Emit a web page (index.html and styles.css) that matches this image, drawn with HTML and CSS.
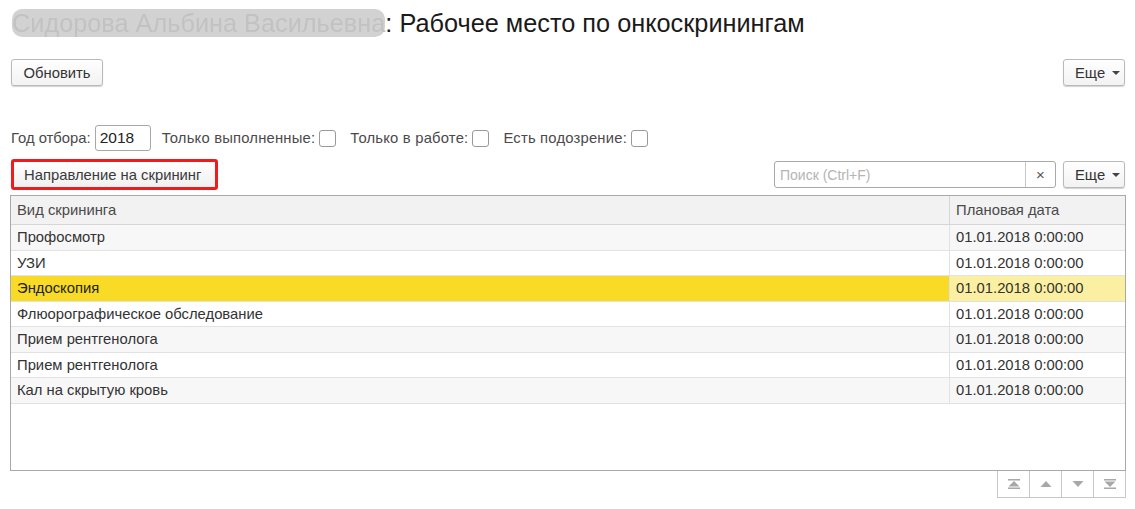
FILE: index.html
```html
<!DOCTYPE html>
<html lang="ru">
<head>
<meta charset="utf-8">
<link rel="stylesheet" href="styles.css">
</head>
<body>
<div class="page">
  <h1 class="title"><span class="blurred">Сидорова Альбина Васильевна</span>: Рабочее место по онкоскринингам</h1>

  <div class="toolbar">
    <button class="btn">Обновить</button>
    <button class="btn more">Еще <span class="caret"></span></button>
  </div>

  <div class="filters">
    <label class="lbl first">Год отбора:</label>
    <div class="year">2018</div>
    <label class="lbl">Только выполненные:</label>
    <span class="check"></span>
    <label class="lbl">Только в работе:</label>
    <span class="check"></span>
    <label class="lbl">Есть подозрение:</label>
    <span class="check"></span>
  </div>

  <div class="cmdbar">
    <button class="btn red">Направление на скрининг</button>
    <div class="spacer"></div>
    <div class="search">
      <span class="placeholder">Поиск (Ctrl+F)</span>
      <span class="clear">×</span>
    </div>
    <button class="btn more">Еще <span class="caret"></span></button>
  </div>

  <div class="table">
    <div class="row head">
      <div class="c1">Вид скрининга</div>
      <div class="c2">Плановая дата</div>
    </div>
    <div class="row odd"><div class="c1">Профосмотр</div><div class="c2">01.01.2018 0:00:00</div></div>
    <div class="row"><div class="c1">УЗИ</div><div class="c2">01.01.2018 0:00:00</div></div>
    <div class="row sel"><div class="c1">Эндоскопия</div><div class="c2">01.01.2018 0:00:00</div></div>
    <div class="row"><div class="c1">Флюорографическое обследование</div><div class="c2">01.01.2018 0:00:00</div></div>
    <div class="row odd"><div class="c1">Прием рентгенолога</div><div class="c2">01.01.2018 0:00:00</div></div>
    <div class="row"><div class="c1">Прием рентгенолога</div><div class="c2">01.01.2018 0:00:00</div></div>
    <div class="row odd"><div class="c1">Кал на скрытую кровь</div><div class="c2">01.01.2018 0:00:00</div></div>
  </div>

  <div class="nav">
    <button class="navbtn"><svg width="12" height="10" viewBox="0 0 12 10"><rect x="0" y="0" width="12" height="1.5" fill="#a8a8a8"/><path d="M6 2 L11.5 7.5 H0.5 Z" fill="#a8a8a8"/><rect x="0" y="8.5" width="12" height="1.5" fill="#a8a8a8"/></svg></button>
    <button class="navbtn"><svg width="12" height="8" viewBox="0 0 12 8"><path d="M6 1 L11.5 7 H0.5 Z" fill="#a8a8a8"/></svg></button>
    <button class="navbtn"><svg width="12" height="8" viewBox="0 0 12 8"><path d="M0.5 1 H11.5 L6 7 Z" fill="#a8a8a8"/></svg></button>
    <button class="navbtn"><svg width="12" height="10" viewBox="0 0 12 10"><rect x="0" y="0" width="12" height="1.5" fill="#a8a8a8"/><path d="M0.5 2.5 H11.5 L6 8 Z" fill="#a8a8a8"/><rect x="0" y="8.5" width="12" height="1.5" fill="#a8a8a8"/></svg></button>
  </div>
</div>
</body>
</html>
```

FILE: styles.css
```css
* { box-sizing: border-box; }
html, body { margin: 0; padding: 0; background: #fff; }
body {
  font-family: "Liberation Sans", Arial, sans-serif;
  font-size: 14.8px;
  color: #333;
}
.page {
  width: 1135px;
  padding: 0 10px 0 10px;
}
.title {
  margin: 0;
  padding-top: 8px;
  height: 59px;
  font-size: 25.3px;
  font-weight: normal;
  color: #1a1a1a;
  line-height: 30px;
  padding-left: 2px;
}
.blurred {
  background: #d2d2d2;
  color: #c2c2c2;
  border-radius: 10px;
  filter: blur(0.6px);
}
.toolbar {
  display: flex;
  justify-content: space-between;
  height: 66px;
  padding-left: 1px;
}
.btn {
  font-family: inherit;
  font-size: 14.8px;
  color: #333;
  height: 27px;
  padding: 0 11px;
  border: 1px solid #b9b9b9;
  border-radius: 3px;
  background: linear-gradient(#ffffff, #f2f2f2);
  box-shadow: 0 1px 1px rgba(0,0,0,0.18);
  display: inline-flex;
  align-items: center;
  gap: 7px;
  cursor: default;
}
.toolbar .btn:first-child { width: 92px; justify-content: center; }
.btn.more { width: 62px; padding: 0 0 0 11px; }
.caret {
  width: 0; height: 0;
  border-left: 4px solid transparent;
  border-right: 4px solid transparent;
  border-top: 4px solid #444;
}
.filters {
  display: flex;
  align-items: center;
  height: 26px;
  padding-left: 1px;
}
.lbl { color: #4a4a4a; margin-right: 4px; letter-spacing: 0.2px; }
.lbl.first { letter-spacing: 0; }
.year {
  width: 56px;
  height: 26px;
  border: 1px solid #a8a8a8;
  border-radius: 3px;
  padding: 3px 0 0 4px;
  font-size: 15.5px;
  color: #222;
  margin-right: 11px;
}
.check {
  width: 17px;
  height: 17px;
  border: 1px solid #9a9a9a;
  border-radius: 3px;
  margin-right: 14px;
  background: #fff;
}
.cmdbar {
  display: flex;
  align-items: center;
  margin-top: 8px;
  height: 31px;
  padding-left: 1px;
}
.btn.red {
  height: 31px;
  width: 207px;
  border: 3px solid #ee1c1c;
  border-radius: 3px;
  padding: 0 10px;
  box-shadow: none;
  background: linear-gradient(#ffffff, #f0f0f0);
  color: #3a3a3a;
}
.spacer { flex: 1; }
.search {
  width: 282px;
  height: 27px;
  border: 1px solid #a8a8a8;
  border-radius: 3px;
  display: flex;
  align-items: center;
  margin-right: 7px;
}
.placeholder {
  flex: 1;
  padding-left: 5px;
  color: #b4b4b4;
  font-size: 14px;
}
.clear {
  width: 30px;
  height: 25px;
  border-left: 1px solid #c8c8c8;
  display: flex;
  align-items: center;
  justify-content: center;
  color: #555;
  font-size: 15px;
}
.table {
  margin-top: 5px;
  width: 1116px;
  height: 276px;
  border: 1px solid #a8a8a8;
}
.row {
  display: flex;
  height: 25.5px;
  border-bottom: 1px solid #e2e2e2;
  background: #fff;
}
.row.odd { background: #f7f7f7; }
.row.head {
  height: 29px;
  background: #f2f2f2;
  border-bottom: 1px solid #d6d6d6;
  color: #4a4a4a;
}
.c1 {
  width: 939px;
  padding-left: 6px;
  display: flex;
  align-items: center;
  border-right: 1px solid #e2e2e2;
}
.head .c1 { border-right: 1px solid #d6d6d6; }
.c2 {
  flex: 1;
  padding-left: 6px;
  display: flex;
  align-items: center;
}
.row.sel .c1 { background: #f9da25; color: #222; }
.row.sel .c2 { background: #fbf0a2; }
.nav {
  display: flex;
  justify-content: flex-end;
  width: 1116px;
}
.navbtn {
  width: 32px;
  height: 27px;
  border: 1px solid #c8c8c8;
  border-top: none;
  border-left: none;
  background: #fff;
  display: flex;
  align-items: center;
  justify-content: center;
  padding: 0;
}
.navbtn:first-child { border-left: 1px solid #c8c8c8; width: 33px; }
```
